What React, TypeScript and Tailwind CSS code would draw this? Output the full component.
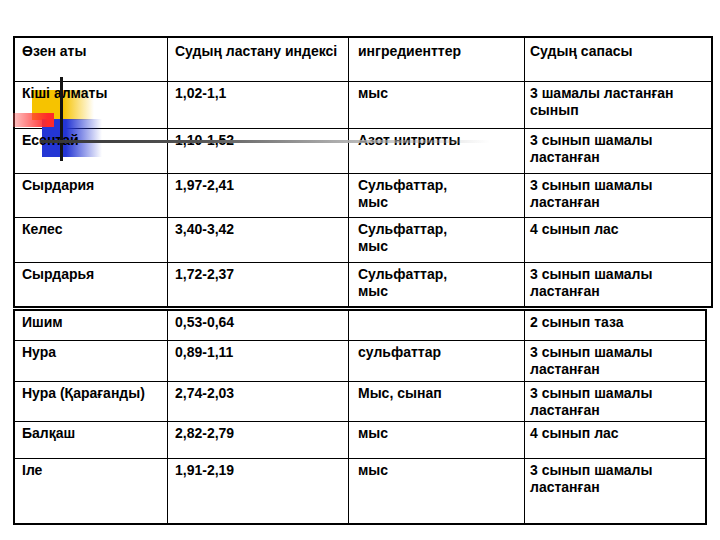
const upperRows: string[][] = [
  ["Өзен аты", "Судың ластану индексі", "ингредиенттер", "Судың сапасы"],
  ["Кіші алматы", "1,02-1,1", "мыс", "3 шамалы ластанған\nсынып"],
  ["Есентай", "1,10-1,52", "Азот нитритты", "3 сынып шамалы\nластанған"],
  ["Сырдария", "1,97-2,41", "Сульфаттар,\nмыс", "3 сынып шамалы\nластанған"],
  ["Келес", "3,40-3,42", "Сульфаттар,\nмыс", "4 сынып лас"],
  ["Сырдарья", "1,72-2,37", "Сульфаттар,\nмыс", "3 сынып шамалы\nластанған"],
];

const lowerRows: string[][] = [
  ["Ишим", "0,53-0,64", "", "2 сынып таза"],
  ["Нура", "0,89-1,11", "сульфаттар", "3 сынып шамалы\nластанған"],
  ["Нура (Қарағанды)", "2,74-2,03", "Мыс, сынап", "3 сынып шамалы\nластанған"],
  ["Балқаш", "2,82-2,79", "мыс", "4 сынып лас"],
  ["Іле", "1,91-2,19", "мыс", "3 сынып шамалы\nластанған"],
];

const upperHeights = ["h-[44px]", "h-[47px]", "h-[45px]", "h-[44px]", "h-[45px]", "h-[43px]"];
const lowerHeights = ["h-[30px]", "h-[41px]", "h-[40px]", "h-[37px]", "h-[64px]"];
const padX = ["pl-[7px]", "pl-[7px]", "pl-[9px]", "pl-[5px]"];

function Cell({ text, col, last, lastRow, height, header }: { text: string; col: number; last: boolean; lastRow: boolean; height: string; header?: boolean }) {
  return (
    <div
      className={`${height} ${padX[col]} ${header ? "pt-[5px]" : "pt-[3px]"} ${last ? "" : "border-r border-black"} ${lastRow ? "" : "border-b border-black"}`}
    >
      <span className="relative z-20 block whitespace-pre leading-[17px]">{text}</span>
    </div>
  );
}

function Table({ rows, heights, width, header }: { rows: string[][]; heights: string[]; width: string; header?: boolean }) {
  return (
    <div className={`${width} grid grid-cols-[153px_181px_176px_1fr] border-2 border-black`}>
      {rows.map((row, r) =>
        row.map((text, c) => (
          <Cell
            key={`${r}-${c}`}
            text={text}
            col={c}
            last={c === 3}
            lastRow={r === rows.length - 1}
            height={heights[r]}
            header={header && r === 0}
          />
        )),
      )}
    </div>
  );
}

export default function App() {
  return (
    <div
      className="relative h-[540px] w-[720px] overflow-hidden bg-white pl-[13px] pt-[36px] text-[14px] font-bold text-black"
      style={{ fontFamily: '"Liberation Sans", Arial, sans-serif' }}
    >
      {/* decorative blocks lying over the table corner */}
      <div className="absolute left-[32px] top-[90px] z-10 h-[30px] w-[62px] bg-[linear-gradient(to_right,#f6c300_50%,rgba(255,255,255,0))]" />
      <div className="absolute left-[42px] top-[119px] z-10 h-[38px] w-[60px] bg-[linear-gradient(to_right,#2436d4_40%,rgba(255,255,255,0))]" />
      <div className="absolute left-[13px] top-[113px] z-10 h-[14px] w-[41px] bg-[linear-gradient(to_right,rgba(255,90,90,0.35),#ff2a2a_85%)]" />
      <div className="absolute left-[60px] top-[77px] z-30 h-[84px] w-[3px] bg-[#141414]" />
      <div className="absolute left-[40px] top-[140px] z-30 h-[3px] w-[450px] bg-[linear-gradient(to_right,#333333,#555555_35%,#aaaaaa_65%,rgba(255,255,255,0))]" />

      <Table rows={upperRows} heights={upperHeights} width="w-[700px]" header />
      <div className="mt-[1px]">
        <Table rows={lowerRows} heights={lowerHeights} width="w-[694px]" />
      </div>
    </div>
  );
}
